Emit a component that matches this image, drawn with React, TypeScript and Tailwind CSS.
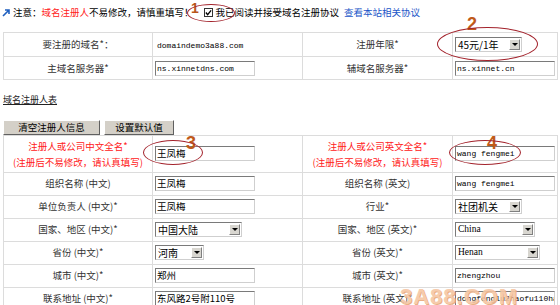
import React from "react";

const cjk = { fontFamily: '"Noto Sans CJK SC", "Liberation Sans", sans-serif' };
const mono = { fontFamily: '"Liberation Mono", "Noto Sans CJK SC", monospace' };
const serif = { fontFamily: '"Liberation Serif", "Noto Sans CJK SC", serif' };

function TextBox({ value, w = "w-[100px]", isMono = false }: { value: string; w?: string; isMono?: boolean }) {
  return (
    <div
      className={`${w} h-[15px] border border-t-[#7a7a7a] border-l-[#7a7a7a] border-r-[#cfcfcf] border-b-[#cfcfcf] bg-white pl-[1px] ${isMono ? "text-[8px]" : "text-[9.5px]"} leading-[13px] text-black overflow-hidden whitespace-nowrap`}
      style={isMono ? mono : cjk}
    >
      {value}
    </div>
  );
}

function Select({ value, w, isSerif = false }: { value: string; w: string; isSerif?: boolean }) {
  return (
    <div
      className={`${w} h-[15px] flex items-center border border-t-[#7a7a7a] border-l-[#7a7a7a] border-r-[#cfcfcf] border-b-[#cfcfcf] bg-white`}
    >
      <span
        className={`flex-1 pl-[2px] ${isSerif ? "text-[9.5px]" : "text-[10px]"} leading-[13px] whitespace-nowrap overflow-hidden`}
        style={isSerif ? serif : cjk}
      >
        {value}
      </span>
      <span className="w-[11px] h-[11px] mr-[1px] bg-[#d8d6d0] border border-t-white border-l-white border-r-[#808080] border-b-[#808080] flex items-center justify-center">
        <span className="w-0 h-0 border-l-[3px] border-r-[3px] border-t-[3px] border-l-transparent border-r-transparent border-t-black" />
      </span>
    </div>
  );
}

type Cell = { label: React.ReactNode; value: React.ReactNode };

function Row({ left, right, h = "h-[23px]" }: { left: Cell; right: Cell; h?: string }) {
  return (
    <tr className={h}>
      <td className="border border-[#dcdcdc] text-center text-[9.5px] text-[#333]">{left.label}</td>
      <td className="border border-[#dcdcdc] pl-[2px]">{left.value}</td>
      <td className="border border-[#dcdcdc] text-center text-[9.5px] text-[#333]">{right.label}</td>
      <td className="border border-[#dcdcdc] pl-[2px]">{right.value}</td>
    </tr>
  );
}

function Cols() {
  return (
    <colgroup>
      <col className="w-[149px]" />
      <col className="w-[150px]" />
      <col className="w-[150px]" />
      <col className="w-[105px]" />
    </colgroup>
  );
}

export default function App() {
  return (
    <div className="relative w-[560px] h-[305px] overflow-hidden bg-white text-[9.5px] text-black" style={cjk}>
      {/* notice */}
      <div className="flex items-center h-[22px] pl-[2px] pt-[2px] text-[9.5px] whitespace-nowrap">
        <svg width="9" height="9" viewBox="0 0 9 9" className="mr-[2px]">
          <path d="M1 8 L7 2 M3 2 H7 V6" stroke="#1f5fbf" strokeWidth="1.6" fill="none" />
        </svg>
        <span>注意：</span>
        <span className="text-[#ff2020]">域名注册人</span>
        <span>不易修改，请慎重填写！</span>
        <span className="ml-[10px] w-[9px] h-[9px] border border-[#333] bg-white flex items-center justify-center">
          <svg width="7" height="7" viewBox="0 0 8 8">
            <path d="M1 4 L3 6.5 L7 1.5" stroke="#000" strokeWidth="1.5" fill="none" />
          </svg>
        </span>
        <span className="ml-[3px]">我已阅读并接受域名注册协议</span>
        <span className="ml-[5px] text-[#1a56c8]">查看本站相关协议</span>
      </div>

      {/* domain table */}
      <table className="ml-[3px] mt-[10px] w-[554px] border-collapse table-fixed">
        <Cols />
        <tbody>
          <Row
            h="h-[24px]"
            left={{
              label: "要注册的域名*：",
              value: (
                <span className="text-[8px] pl-[2px]" style={mono}>
                  domaindemo3a88.com
                </span>
              ),
            }}
            right={{ label: "注册年限*", value: <Select value="45元/1年" w="w-[67px]" /> }}
          />
          <Row
            left={{ label: "主域名服务器*", value: <TextBox value="ns.xinnetdns.com" isMono /> }}
            right={{ label: "辅域名服务器*", value: <TextBox value="ns.xinnet.cn" isMono /> }}
          />
        </tbody>
      </table>

      <div className="ml-[3px] mt-[13px] text-[9px] underline text-[#222]">域名注册人表</div>

      {/* buttons */}
      <div className="ml-[3px] mt-[13px] flex gap-[4px]">
        <button className="w-[97px] h-[15px] bg-[#d4d0c8] border border-t-white border-l-white border-r-[#606060] border-b-[#606060] text-[9.5px] leading-[13px]">
          清空注册人信息
        </button>
        <button className="w-[70px] h-[15px] bg-[#d4d0c8] border border-t-white border-l-white border-r-[#606060] border-b-[#606060] text-[9.5px] leading-[13px]">
          设置默认值
        </button>
      </div>

      {/* registrant table */}
      <table className="ml-[3px] w-[554px] border-collapse table-fixed">
        <Cols />
        <tbody>
          <tr className="h-[37px]">
            <td className="border border-[#dcdcdc] text-center text-[9.5px] text-[#ff2020] leading-[16px]">
              注册人或公司中文全名*
              <br />
              (注册后不易修改，请认真填写)
            </td>
            <td className="border border-[#dcdcdc] pl-[2px]">
              <TextBox value="王凤梅" />
            </td>
            <td className="border border-[#dcdcdc] text-center text-[9.5px] text-[#ff2020] leading-[16px]">
              注册人或公司英文全名*
              <br />
              (注册后不易修改，请认真填写)
            </td>
            <td className="border border-[#dcdcdc] pl-[2px]">
              <TextBox value="wang fengmei" isMono />
            </td>
          </tr>
          <Row
            left={{ label: "组织名称 (中文)", value: <TextBox value="王凤梅" /> }}
            right={{ label: "组织名称 (英文)", value: <TextBox value="wang fengmei" isMono /> }}
          />
          <Row
            left={{ label: "单位负责人 (中文)*", value: <TextBox value="王凤梅" /> }}
            right={{ label: "行业*", value: <Select value="社团机关" w="w-[67px]" /> }}
          />
          <Row
            left={{ label: "国家、地区 (中文)*", value: <Select value="中国大陆" w="w-[87px]" /> }}
            right={{ label: "国家、地区 (英文)*", value: <Select value="China" w="w-[80px]" isSerif /> }}
          />
          <Row
            left={{ label: "省份 (中文)*", value: <Select value="河南" w="w-[49px]" /> }}
            right={{ label: "省份 (英文)*", value: <Select value="Henan" w="w-[85px]" isSerif /> }}
          />
          <Row
            left={{ label: "城市 (中文)*", value: <TextBox value="郑州" /> }}
            right={{ label: "城市 (英文)*", value: <TextBox value="zhengzhou" isMono /> }}
          />
          <Row
            left={{ label: "联系地址 (中文)*", value: <TextBox value="东风路2号附110号" /> }}
            right={{ label: "联系地址 (英文)*", value: <TextBox value="dongfenglu2haofu110hao" isMono /> }}
          />
        </tbody>
      </table>

      {/* annotations */}
      <span className="absolute left-[191px] top-[1px] text-[14px] font-bold text-[#b8561c] leading-none" style={{ fontFamily: '"Liberation Sans", sans-serif' }}>
        1
      </span>
      <span className="absolute left-[467px] top-[15px] text-[18px] font-bold text-[#c05a1a] leading-none" style={{ fontFamily: '"Liberation Sans", sans-serif' }}>
        2
      </span>
      <span className="absolute left-[186px] top-[134px] text-[18px] font-bold text-[#c05a1a] leading-none" style={{ fontFamily: '"Liberation Sans", sans-serif' }}>
        3
      </span>
      <span className="absolute left-[487px] top-[134px] text-[18px] font-bold text-[#c05a1a] leading-none" style={{ fontFamily: '"Liberation Sans", sans-serif' }}>
        4
      </span>
      <div className="absolute left-[187px] top-[4px] w-[48px] h-[18px] rounded-[50%] border-[1.5px] border-[#a3232c]" />
      <div className="absolute left-[437px] top-[27px] w-[101px] h-[34px] rounded-[50%] border-[1.5px] border-[#a3232c]" />
      <div className="absolute left-[143px] top-[140px] w-[60px] h-[25px] rounded-[50%] border-[1.5px] border-[#a3232c]" />
      <div className="absolute left-[449px] top-[140px] w-[72px] h-[25px] rounded-[50%] border-[1.5px] border-[#a3232c]" />

      {/* watermark */}
      <span
        className="absolute left-[400px] top-[280px] text-[22px] font-black tracking-[1px] text-[#f6c6a4] opacity-90"
        style={{ fontFamily: '"Liberation Sans", sans-serif', textShadow: "1px 1px 0 #e8a878" }}
      >
        3A88.COM
      </span>
    </div>
  );
}
